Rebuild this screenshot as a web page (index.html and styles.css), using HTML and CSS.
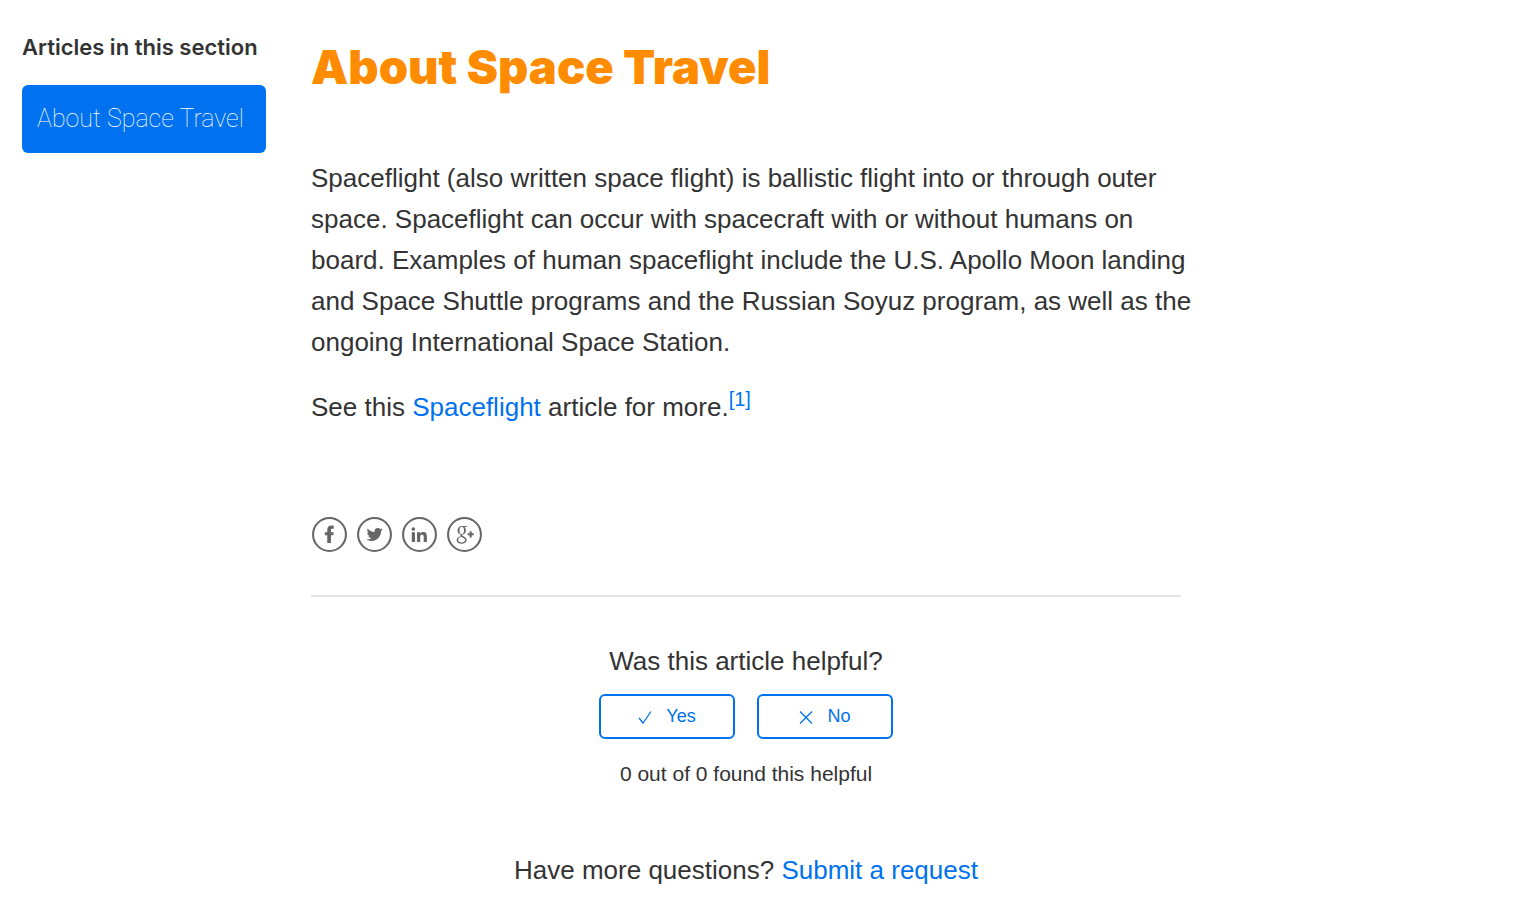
FILE: index.html
```html
<!DOCTYPE html>
<html lang="en">
  <head>
    <meta charset="UTF-8" />
    <meta name="viewport" content="width=device-width, initial-scale=1" />
    <title>About Space Travel</title>
    <link rel="stylesheet" href="styles.css">
  </head>
  <body>
    <div class="article-container">
      <aside class="article-sidebar">
        <h2 class="sidebar-title">Articles in this section</h2>
        <nav>
          <a class="sidebar-item current" href="#about">About Space Travel</a>
        </nav>
      </aside>

      <main class="article" id="about">
        <h1 class="article-title">About Space Travel</h1>

        <div class="article-body">
          <p>Spaceflight (also written space flight) is ballistic flight into or through outer space. Spaceflight can occur with spacecraft with or without humans on board. Examples of human spaceflight include the U.S. Apollo Moon landing and Space Shuttle programs and the Russian Soyuz program, as well as the ongoing International Space Station.</p>
          <p>See this <a href="#spaceflight">Spaceflight</a> article for more.<sup><a href="#note-1">[1]</a></sup></p>
        </div>

        <div class="share">
          <a href="#facebook" aria-label="Facebook">
            <svg viewBox="0 0 36 36">
              <circle cx="18" cy="18" r="16" />
              <path d="M15.800 26.200v-7.500h-2.400v-3h2.400v-2.200c0-2.800 1.600-4.200 4-4.200h2.300v3.200h-1.300c-1.100 0-1.400.5-1.400 1.400v1.800h2.700l-.4 3h-2.300v7.500z" />
            </svg>
          </a>
          <a href="#twitter" aria-label="Twitter">
            <svg viewBox="0 0 36 36">
              <circle cx="18" cy="18" r="16" />
              <path d="M25.9 13c-.6.3-1.2.4-1.8.5.6-.4 1.1-1 1.4-1.7-.6.4-1.3.6-2 .8a3.25 3.25 0 0 0-5.5 2.9c-2.7-.1-5-1.4-6.6-3.4-.9 1.5-.4 3.4 1 4.3-.5 0-1-.1-1.5-.4 0 1.6 1.1 2.9 2.6 3.2-.5.1-1 .2-1.5.1.4 1.3 1.6 2.2 3 2.2-1.4 1.1-3 1.6-4.8 1.4 1.5.9 3.2 1.5 5 1.5 6 0 9.3-5 9.2-9.7.6-.4.9-1 1.5-1.7z" />
            </svg>
          </a>
          <a href="#linkedin" aria-label="LinkedIn">
            <svg viewBox="0 0 36 36">
              <circle cx="18" cy="18" r="16" />
              <path d="M10.5 15.800h3.100v9.600h-3.100zM12 11a1.750 1.750 0 1 1 0 3.500 1.750 1.750 0 0 1 0-3.500zM15.600 15.800h3v1.300c.5-.9 1.500-1.500 2.900-1.500 3 0 3.700 1.900 3.700 4.500v5.300h-3.100v-4.700c0-1.200-.1-2.500-1.600-2.500-1.600 0-1.800 1.200-1.800 2.500v4.700h-3.100z" />
            </svg>
          </a>
          <a href="#googleplus" aria-label="Google+">
            <svg viewBox="0 0 36 36">
              <circle cx="18" cy="18" r="16" />
              <path fill-rule="evenodd" d="M11.200 14a4.100 4.300 0 1 0 8.200 0a4.100 4.300 0 1 0-8.200 0zM13.100 14a2.200 3.500 0 1 1 4.400 0a2.200 3.500 0 1 1-4.400 0z" />
              <path fill-rule="evenodd" d="M10.300 23.400a4.900 3.600 0 1 0 9.800 0a4.900 3.600 0 1 0-9.800 0zM11.900 23.200a3.300 2.700 0 1 1 6.600 0a3.300 2.700 0 1 1-6.600 0z" />
              <path d="M15.300 9.700h5.800l-1.500 1.100h-3zM14.300 17.800h1.600c-.7.9.1 1.500 1.200 2.200 1.200.7 2 1.300 2.400 2.200l-1.500.2c-.5-.8-1.300-1.300-2.300-1.900-1.400-.8-2.300-1.500-1.400-2.800z" />
              <path class="plus" d="M24 14.800v6M21 17.800h6" />
            </svg>
          </a>
        </div>

        <section class="article-votes">
          <h2 class="votes-question">Was this article helpful?</h2>
          <div class="votes-controls">
            <button class="vote" type="button">
              <svg viewBox="0 0 14 14" aria-hidden="true"><path d="M1 8l4 5 8-11.500" /></svg>
              Yes
            </button>
            <button class="vote" type="button">
              <svg viewBox="0 0 14 14" aria-hidden="true"><path d="M1 1.500l12 12M13 1.500l-12 12" /></svg>
              No
            </button>
          </div>
          <p class="votes-count">0 out of 0 found this helpful</p>
        </section>

        <p class="more-questions">Have more questions? <a href="#request">Submit a request</a></p>
      </main>
    </div>
  </body>
</html>
```
FILE: styles.css
```css
*{
    box-sizing: border-box;
    margin: 0;
    padding: 0;
}
:root{
    --text: #333;
    --brand: #0072ef;
    --accent: #ff8c00;
}
body{
    font-family: "Helvetica Neue", "Liberation Sans", Arial, sans-serif;
    font-size: 26px;
    line-height: 32px;
    color: var(--text);
    background-color: #fff;
}
a{
    color: var(--brand);
    text-decoration: none;
}
a:hover{
    text-decoration: underline;
}
.article-container{
    display: grid;
    grid-template-columns: 244fr 870fr 270fr;
    column-gap: 45px;
    padding: 31px 22px 20px;
}
/* sidebar */
.sidebar-title{
    font-family: Inter, sans-serif;
    font-size: 22px;
    font-weight: 600;
    line-height: 32px;
    white-space: nowrap;
}
.sidebar-item{
    display: block;
    margin-top: 22px;
    padding: 18px 15px;
    border-radius: 6px;
    font-family: Roboto, sans-serif;
    font-size: 25px;
    font-weight: 100;
    white-space: nowrap;
}
.sidebar-item.current{
    color: #fff;
    background-color: var(--brand);
}
/* article */
.article-title{
    font-family: Inter, sans-serif;
    font-size: 47px;
    font-weight: 900;
    line-height: 72px;
    color: var(--accent);
}
.article-body{
    margin-top: 55px;
    margin-right: -14px;
    line-height: 41px;
}
.article-body p + p{
    margin-top: 24px;
}
.article-body sup{
    font-size: 20px;
    line-height: 0;
    vertical-align: super;
}
.share{
    display: flex;
    gap: 8px;
    margin-top: 88px;
}
.share svg{
    display: block;
    width: 37px;
    height: 37px;
    fill: #666;
}
.share circle{
    fill: none;
    stroke: #666;
    stroke-width: 2;
}
.share .plus{
    stroke: #666;
    stroke-width: 2;
}
/* votes */
.article-votes{
    margin-top: 42px;
    padding-top: 48px;
    border-top: 2px solid #e3e3e3;
    text-align: center;
}
.votes-question{
    font-size: 26px;
    font-weight: 400;
}
.votes-controls{
    display: flex;
    justify-content: center;
    gap: 22px;
    margin-top: 17px;
}
.vote{
    display: flex;
    align-items: center;
    justify-content: center;
    gap: 14px;
    width: 136px;
    height: 45px;
    border: 2px solid var(--brand);
    border-radius: 6px;
    font-family: inherit;
    font-size: 18px;
    color: var(--brand);
    background-color: #fff;
    cursor: pointer;
}
.vote svg{
    width: 14px;
    height: 14px;
    fill: none;
    stroke: currentColor;
    stroke-width: 1.3;
}
.votes-count{
    margin-top: 19px;
    font-size: 21px;
}
.more-questions{
    margin-top: 64px;
    text-align: center;
}
```
